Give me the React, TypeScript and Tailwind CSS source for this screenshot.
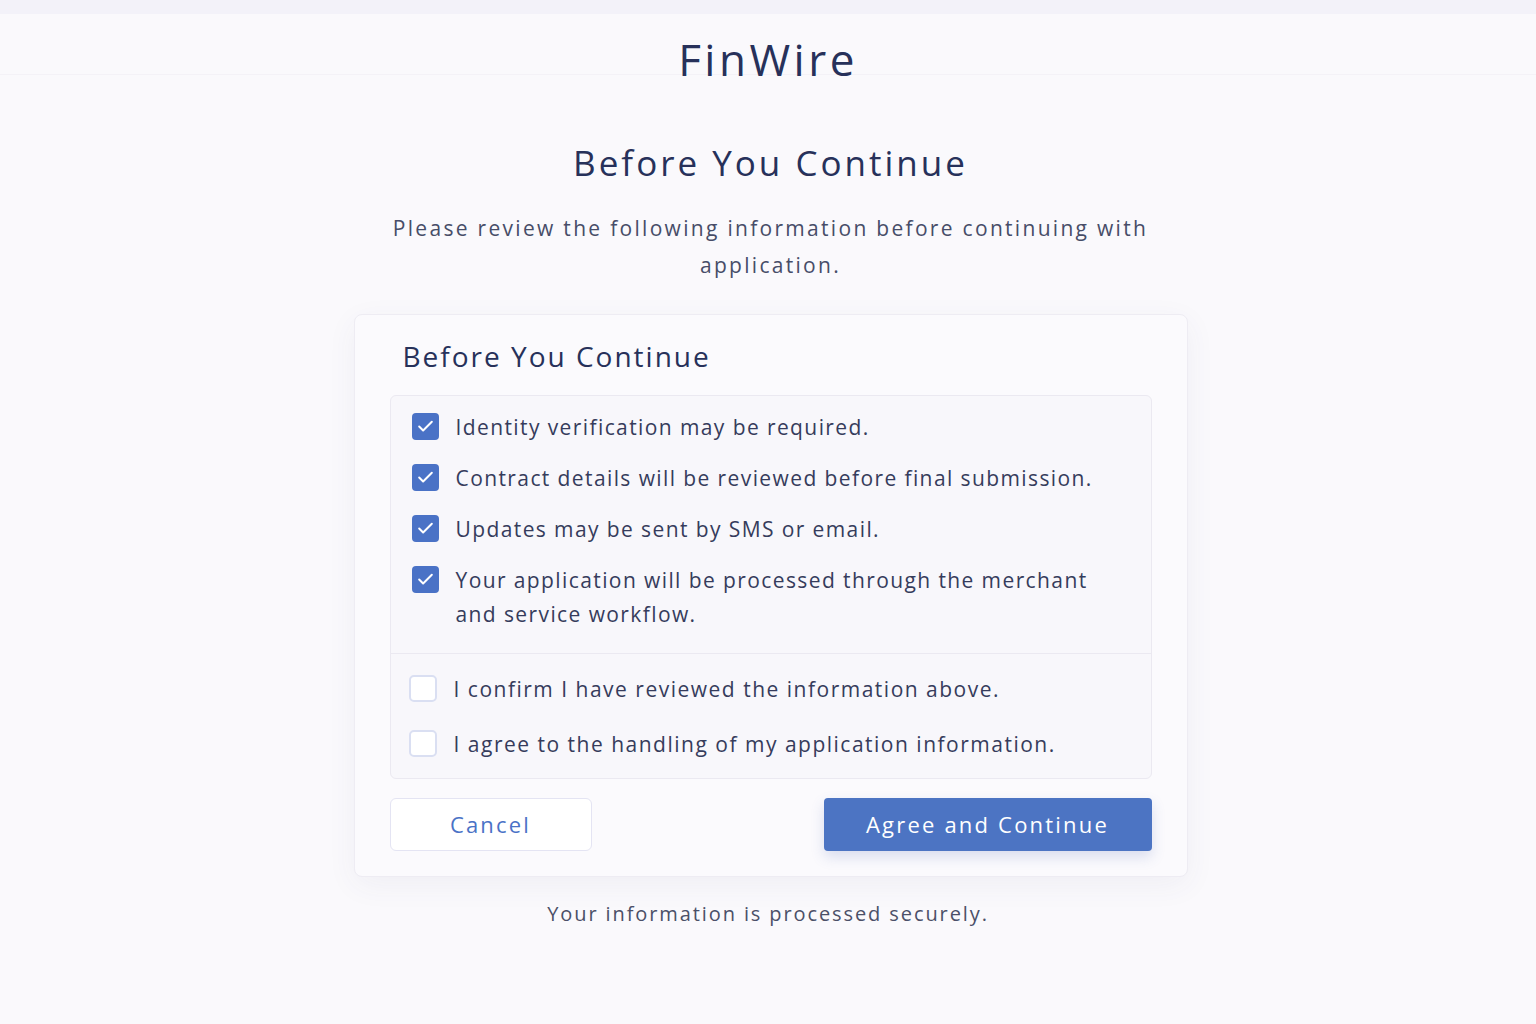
import { Check } from "lucide-react";

const notices = [
  "Identity verification may be required.",
  "Contract details will be reviewed before final submission.",
  "Updates may be sent by SMS or email.",
  "Your application will be processed through the merchant and service workflow.",
];

const confirms = [
  "I confirm I have reviewed the information above.",
  "I agree to the handling of my application information.",
];

export default function App() {
  return (
    <div
      className="min-h-[1024px] w-full bg-[#faf9fc] text-[#2b3457]"
      style={{ fontFamily: '"Open Sans", "Liberation Sans", sans-serif' }}
    >
      <div className="h-[14px] bg-[#f3f2f9]" />
      <header className="flex h-[61px] items-end justify-center border-b border-[#f4f2f7]">
        <h1 className="mb-[-7px] text-[44px] font-normal leading-none tracking-[3.5px] text-[#27315a]">
          FinWire
        </h1>
      </header>

      <main className="flex flex-col items-center pl-[5px]">
        <h2 className="mt-[62px] text-[35px] font-normal tracking-[3px] text-[#27315a]">
          Before You Continue
        </h2>
        <p className="mt-[20px] max-w-[800px] text-center text-[21px] leading-[37px] tracking-[2.3px] text-[#474d68]">
          Please review the following information before continuing with application.
        </p>

        <section className="mt-[30px] w-[834px] rounded-lg border border-[#eeecf3] bg-[#fbfafd] px-[35px] pb-[25px] pt-[20px] shadow-[0_8px_30px_rgba(60,60,120,0.06)]">
          <h3 className="pl-[13px] text-[28px] font-normal tracking-[2px] text-[#27315a]">
            Before You Continue
          </h3>

          <div className="mt-[18px] rounded-md border border-[#ebe9f1] bg-[#f8f7fb]">
            <ul className="flex flex-col gap-[17px] px-[21px] pb-[22px] pt-[14px]">
              {notices.map((n) => (
                <li key={n} className="flex items-start gap-[17px]">
                  <span className="mt-[3px] flex h-[27px] w-[27px] shrink-0 items-center justify-center rounded-[4px] bg-[#4a72c6]">
                    <Check className="h-[19px] w-[19px] text-white" strokeWidth={2.5} />
                  </span>
                  <span className="max-w-[665px] text-[21px] leading-[34px] tracking-[1.4px] text-[#363c5c]">
                    {n}
                  </span>
                </li>
              ))}
            </ul>
            <div className="border-t border-[#ebe9f1]" />
            <ul className="flex flex-col gap-[21px] px-[18px] pb-[17px] pt-[18px]">
              {confirms.map((c) => (
                <li key={c} className="flex items-center gap-[17px]">
                  <span className="h-[27px] w-[28px] shrink-0 rounded-[5px] border-2 border-[#dadff2] bg-white" />
                  <span className="text-[21px] leading-[34px] tracking-[1.5px] text-[#363c5c]">{c}</span>
                </li>
              ))}
            </ul>
          </div>

          <div className="mt-[19px] flex items-center justify-between">
            <button className="h-[53px] w-[202px] rounded-md border border-[#e4e4f3] bg-white text-[22px] tracking-[2.2px] text-[#4a72c6]">
              Cancel
            </button>
            <button className="h-[53px] w-[328px] rounded-[4px] bg-[#4c74c3] text-[22px] tracking-[2.2px] text-white shadow-[0_6px_14px_rgba(60,90,170,0.18)]">
              Agree and Continue
            </button>
          </div>
        </section>

        <p className="mt-[22px] pr-[5px] text-[20px] tracking-[1.9px] text-[#4b5068]">
          Your information is processed securely.
        </p>
      </main>
    </div>
  );
}
